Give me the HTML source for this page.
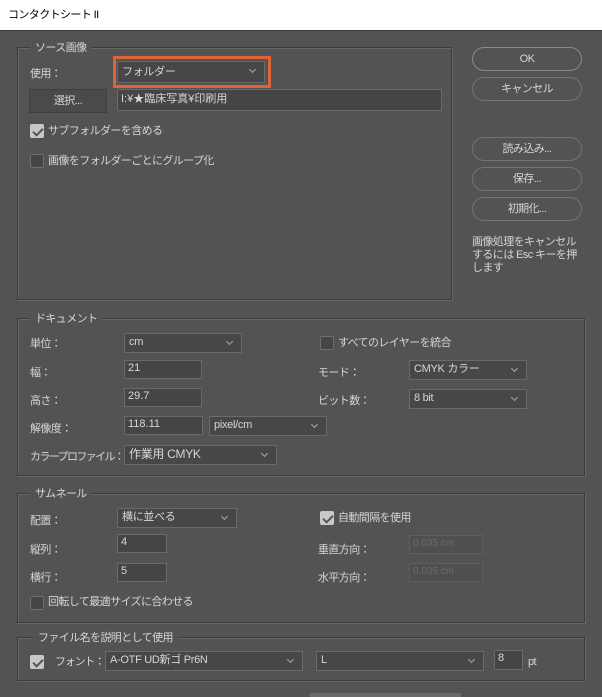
<!DOCTYPE html>
<html><head><meta charset="utf-8">
<style>
*{margin:0;padding:0;box-sizing:border-box}
body{width:602px;height:697px;background:#535353;position:relative;overflow:hidden;font-family:"Liberation Sans","Noto Sans CJK JP",sans-serif;font-size:11px;letter-spacing:-0.6px;color:#d6d6d6}
.a{position:absolute;white-space:nowrap;line-height:14px}
#title{position:absolute;left:0;top:0;width:602px;height:31px;background:#fff;color:#000;font-size:11px;line-height:31px;padding-left:8px;border-bottom:1px solid #3a3a3a}
.grp{position:absolute;border:1px solid #3c3c3c;box-shadow:1px 1px 0 #666 inset,1px 1px 0 #666}
.lg{position:absolute;background:#535353;padding:0 5px;line-height:14px}
.dd{position:absolute;background:#474747;border:1px solid #6a6a6a;line-height:17px;padding-left:4px;letter-spacing:-0.3px}
.dd:after{content:"";position:absolute;right:9px;top:5px;width:4px;height:4px;border-right:1px solid #aaa;border-bottom:1px solid #aaa;transform:rotate(45deg)}
.in{position:absolute;background:#454545;border:1px solid #6a6a6a;line-height:15px;padding-left:3px;letter-spacing:0}
.dis{color:#6c6c6c;border-color:#5f5f5f;background:#4f4f4f;font-size:10px}
.cb{position:absolute;width:14px;height:14px;background:#454545;border:1px solid #6e6e6e;border-radius:2px}
.cb.on{background:#c8c8c8;border-color:#c8c8c8}
.cb.on:after{content:"";position:absolute;left:4px;top:1px;width:4px;height:8px;border-right:2px solid #555;border-bottom:2px solid #555;transform:rotate(45deg)}
.bt{position:absolute;left:472px;width:110px;height:24px;border:1px solid #8a8a8a;border-radius:12px;text-align:center;line-height:22px}
.bt.f{border-color:#737373}
</style></head><body>
<div id="title">コンタクトシート II</div>

<div class="grp" style="left:17px;top:47px;width:435px;height:253px"></div>
<div class="lg" style="left:30px;top:41px">ソース画像</div>
<div class="a" style="left:30px;top:67px">使用：</div>
<div style="position:absolute;left:113px;top:56px;width:158px;height:32px;border:3px solid #e0643a"></div>
<div class="dd" style="left:117px;top:61px;width:148px;height:22px;line-height:20px">フォルダー</div>
<div style="position:absolute;left:29px;top:89px;width:78px;height:24px;background:#4a4a4a;border:1px solid #3e3e3e;text-align:center;line-height:22px">選択...</div>
<div class="in" style="left:117px;top:89px;width:325px;height:22px;line-height:18px">I:¥★臨床写真¥印刷用</div>
<div class="cb on" style="left:30px;top:124px"></div>
<div class="a" style="left:48px;top:124px">サブフォルダーを含める</div>
<div class="cb" style="left:30px;top:154px"></div>
<div class="a" style="left:48px;top:154px">画像をフォルダーごとにグループ化</div>

<div class="bt" style="top:47px">OK</div>
<div class="bt f" style="top:77px">キャンセル</div>
<div class="bt f" style="top:137px">読み込み...</div>
<div class="bt f" style="top:167px">保存...</div>
<div class="bt f" style="top:197px">初期化...</div>
<div class="a" style="left:472px;top:236px;line-height:13px;white-space:normal;width:106px">画像処理をキャンセルするには Esc キーを押します</div>

<div class="grp" style="left:17px;top:318px;width:568px;height:158px"></div>
<div class="lg" style="left:30px;top:312px">ドキュメント</div>
<div class="a" style="left:30px;top:337px">単位：</div>
<div class="dd" style="left:124px;top:333px;width:118px;height:20px">cm</div>
<div class="a" style="left:30px;top:366px">幅：</div>
<div class="in" style="left:124px;top:360px;width:78px;height:19px">21</div>
<div class="a" style="left:30px;top:394px">高さ：</div>
<div class="in" style="left:124px;top:388px;width:78px;height:19px">29.7</div>
<div class="a" style="left:30px;top:422px">解像度：</div>
<div class="in" style="left:124px;top:416px;width:79px;height:19px">118.11</div>
<div class="dd" style="left:209px;top:416px;width:118px;height:20px">pixel/cm</div>
<div class="a" style="left:30px;top:450px;letter-spacing:-1.6px">カラープロファイル：</div>
<div class="dd" style="left:124px;top:445px;width:153px;height:20px;font-size:12px">作業用 CMYK</div>
<div class="cb" style="left:320px;top:336px"></div>
<div class="a" style="left:338px;top:336px">すべてのレイヤーを統合</div>
<div class="a" style="left:318px;top:366px">モード：</div>
<div class="dd" style="left:409px;top:360px;width:118px;height:20px">CMYK カラー</div>
<div class="a" style="left:318px;top:394px">ビット数：</div>
<div class="dd" style="left:409px;top:389px;width:118px;height:20px">8 bit</div>

<div class="grp" style="left:17px;top:493px;width:568px;height:130px"></div>
<div class="lg" style="left:30px;top:487px">サムネール</div>
<div class="a" style="left:30px;top:514px">配置：</div>
<div class="dd" style="left:117px;top:508px;width:120px;height:20px">横に並べる</div>
<div class="a" style="left:30px;top:543px">縦列：</div>
<div class="in" style="left:117px;top:534px;width:50px;height:19px">4</div>
<div class="a" style="left:30px;top:571px">横行：</div>
<div class="in" style="left:117px;top:563px;width:50px;height:19px">5</div>
<div class="cb" style="left:30px;top:596px"></div>
<div class="a" style="left:48px;top:595px">回転して最適サイズに合わせる</div>
<div class="cb on" style="left:320px;top:511px"></div>
<div class="a" style="left:338px;top:511px">自動間隔を使用</div>
<div class="a" style="left:318px;top:543px">垂直方向：</div>
<div class="in dis" style="left:409px;top:535px;width:74px;height:19px">0.035 cm</div>
<div class="a" style="left:318px;top:571px">水平方向：</div>
<div class="in dis" style="left:409px;top:563px;width:74px;height:19px">0.035 cm</div>

<div class="grp" style="left:17px;top:637px;width:568px;height:44px"></div>
<div class="lg" style="left:33px;top:631px">ファイル名を説明として使用</div>
<div class="cb on" style="left:30px;top:655px"></div>
<div class="a" style="left:55px;top:655px;letter-spacing:-1.2px">フォント：</div>
<div class="dd" style="left:105px;top:651px;width:198px;height:20px">A-OTF UD新ゴ Pr6N</div>
<div class="dd" style="left:316px;top:651px;width:168px;height:20px">L</div>
<div class="in" style="left:494px;top:650px;width:29px;height:20px">8</div>
<div class="a" style="left:528px;top:655px">pt</div>
<div style="position:absolute;left:310px;top:693px;width:151px;height:4px;background:#6a6a6a"></div>
</body></html>
